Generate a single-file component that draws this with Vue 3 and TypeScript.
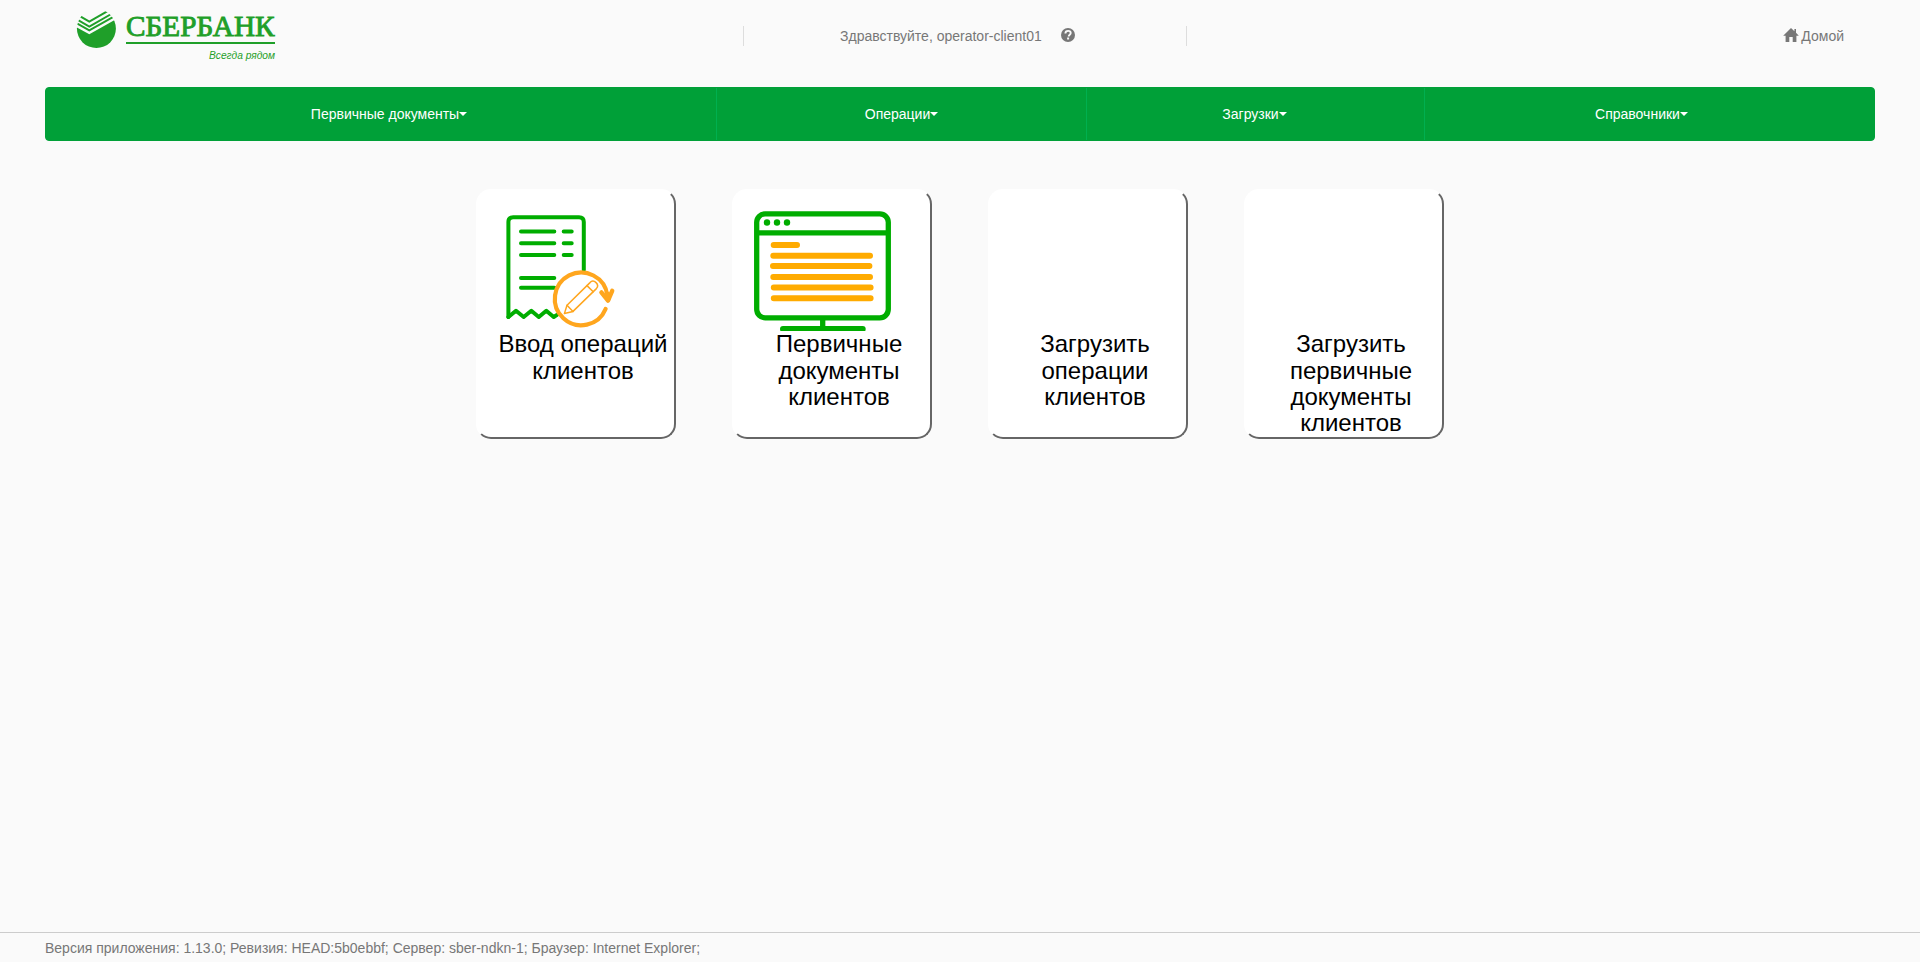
<script setup lang="ts">
interface MenuItem {
  title: string
  slot: string
}
interface Tile {
  title: string
  icon: 'receipt' | 'monitor' | null
}

const menu: MenuItem[] = [
  { title: 'Первичные документы', slot: 'documents' },
  { title: 'Операции', slot: 'operations' },
  { title: 'Загрузки', slot: 'uploads' },
  { title: 'Справочники', slot: 'catalogs' },
]

const tiles: Tile[] = [
  { title: 'Ввод операций клиентов', icon: 'receipt' },
  { title: 'Первичные документы клиентов', icon: 'monitor' },
  { title: 'Загрузить операции клиентов', icon: null },
  { title: 'Загрузить первичные документы клиентов', icon: null },
]
</script>

<template>
  <div class="page">
    <header class="header">
      <svg class="logo" width="260" height="80" viewBox="0 0 260 80">
        <defs>
          <clipPath id="disc"><circle cx="26.4" cy="28.6" r="19.5" /></clipPath>
        </defs>
        <g clip-path="url(#disc)">
          <path class="logo-fill" d="M5 26.4 L19.3 34.2 L48 18.2 V50 H5 Z" />
          <g class="logo-stripes">
            <path d="M5 22.4 L19.3 30.4 L47 14.9" />
            <path d="M5 18.4 L19.3 26.5 L43 13" />
            <path d="M9 15.6 L19.3 21.6 L38 10.8" />
          </g>
        </g>
        <text class="logo-name" x="56" y="35.5" textLength="148.5" lengthAdjust="spacingAndGlyphs">СБЕРБАНК</text>
        <rect class="logo-fill" x="56" y="42" width="149" height="2" />
        <text class="logo-motto" x="139" y="59" textLength="66" lengthAdjust="spacingAndGlyphs">Всегда рядом</text>
      </svg>
      <div class="greeting">
        <span>Здравствуйте, operator-client01</span>
        <svg class="help" width="14" height="14" viewBox="0 0 14 14">
          <circle cx="7" cy="7" r="7" fill="#777" />
          <path d="M4.4 5.4 C4.4 3.5 5.5 2.9 7.1 2.9 C8.8 2.9 9.7 3.8 9.7 5.1 C9.7 6.8 7.7 6.8 7.7 8.4" fill="none" stroke="#fafafa" stroke-width="1.9" />
          <rect x="6.1" y="9.5" width="2" height="2" fill="#fafafa" />
        </svg>
      </div>
      <a class="home">
        <svg width="16" height="14" viewBox="0 0 16 14">
          <path d="M8 0 L11.4 3.2 V1 H13 V4.7 L15.8 7.7 H13.4 V14 H9.7 V9 H6.3 V14 H2.6 V7.7 H0.2 Z" fill="#777" />
        </svg>
        <span>Домой</span>
      </a>
    </header>

    <nav class="menu">
      <a v-for="item in menu" :key="item.slot" class="menu-item" :class="item.slot">
        <span>{{ item.title }}</span><i class="caret"></i>
      </a>
    </nav>

    <main class="tiles">
      <a v-for="tile in tiles" :key="tile.title" class="tile">
        <div class="picture">
          <svg v-if="tile.icon === 'receipt'" width="196" height="140" viewBox="2 2 196 140">
            <g class="green thin">
              <path d="M32.4 128 V33 Q32.4 28.2 37.2 28.2 H103 Q107.8 28.2 107.8 33 V81" />
              <path d="M32.4 128 L40 121.8 L47.7 128 L55.3 121.8 L62.8 128 L70.3 121.8 L77.7 128 L81 125.8" />
              <path d="M45 42.4 H78.3 M45 54.2 H78.3 M45 66 H78.3 M45 89 H78.3 M45 98.7 H78.3" />
              <path d="M87.7 42.4 H95.7 M87.7 54.2 H95.7 M87.7 66 H95.7" />
            </g>
            <circle cx="105.2" cy="109.7" r="26.4" fill="#fff" />
            <g class="orange">
              <path d="M129.6 120 A26.4 26.4 0 1 1 131.4 106.5" stroke-width="4.2" />
              <path d="M125.4 103.4 L132 111.6 L136.2 101.8" stroke-width="4.4" />
              <path d="M131.2 105 L132 110" stroke-width="5" />
              <g stroke-width="1.5">
                <path d="M88.4 124.6 L91 116.2 L114 93.6 Q116.8 90.4 119.8 93.4 Q123.2 96.6 120.4 99.6 L97 122.4 Z" />
                <path d="M91 116.2 L97 122.4 M111 96.6 L117.2 102.7" />
              </g>
            </g>
          </svg>
          <svg v-else-if="tile.icon === 'monitor'" width="196" height="140" viewBox="2 2 196 140">
            <g class="green">
              <rect x="24.7" y="24.8" width="131.6" height="104" rx="8.5" />
              <path d="M24.7 43.8 H156.3 M90.7 129 V140" stroke-linecap="butt" />
              <path d="M51 140 H130.7" stroke-width="6" />
            </g>
            <g fill="#00ad00">
              <circle cx="35" cy="33.5" r="3.2" />
              <circle cx="45" cy="33.5" r="3.2" />
              <circle cx="55" cy="33.5" r="3.2" />
            </g>
            <path
              class="lines"
              d="M41.7 56.1 H65 M41.3 66.8 H138 M41 76.9 H137.4 M41.3 88.1 H138 M41.8 98.5 H138.6 M41.8 109.2 H138.6"
            />
          </svg>
        </div>
        <div class="tile-title">{{ tile.title }}</div>
      </a>
    </main>

    <footer class="footer">
      Версия приложения: 1.13.0; Ревизия: HEAD:5b0ebbf; Сервер: sber-ndkn-1; Браузер: Internet Explorer;
    </footer>
  </div>
</template>

<style>
body {
  margin: 0;
  background: #fafafa;
}
</style>

<style scoped>
.page {
  box-sizing: border-box;
  display: flex;
  flex-direction: column;
  height: 962px;
  font-family: 'Liberation Sans', Arial, sans-serif;
  font-size: 14px;
  line-height: 20px;
  color: #777;
  background: #fafafa;
}
.header {
  display: flex;
  height: 87px;
  padding: 0 76px 0 70px;
}
.logo {
  flex: none;
}
.logo-fill {
  fill: #1f9f29;
}
.logo-stripes path {
  fill: none;
  stroke: #1f9f29;
  stroke-width: 2;
}
.logo-name {
  font: 29px 'Liberation Serif', serif;
  fill: #1f9f29;
  stroke: #1f9f29;
  stroke-width: 0.9;
}
.logo-motto {
  font: italic 11.5px 'Liberation Sans', sans-serif;
  fill: #1f9f29;
}
.greeting {
  box-sizing: border-box;
  display: flex;
  gap: 19px;
  width: 444px;
  height: 20px;
  margin: 26px 0 0 413px;
  padding-left: 96px;
  border: solid #ddd;
  border-width: 0 1px;
}
.help {
  margin-top: 2px;
}
.home {
  display: flex;
  gap: 2px;
  height: 20px;
  margin: 26px 0 0 auto;
}
.home svg {
  margin-top: 2px;
}
.menu {
  box-sizing: border-box;
  display: grid;
  grid-template-columns: 670px 370px 338px 1fr;
  height: 54px;
  margin: 0 45px;
  border: 1px solid #00a038;
  border-radius: 4px;
  background: #00a038;
}
.menu-item {
  display: flex;
  align-items: center;
  justify-content: center;
  color: #fff;
}
.menu-item + .menu-item {
  border-left: 1px solid #00b050;
}
.documents {
  padding-left: 16px;
}
.uploads {
  padding-right: 2px;
}
.catalogs {
  padding-right: 16px;
}
.caret {
  border: solid transparent;
  border-width: 4px 4px 0;
  border-top-color: #fff;
}
.tiles {
  display: flex;
  justify-content: center;
  gap: 56px;
  margin-top: 48px;
}
.tile {
  box-sizing: border-box;
  width: 200px;
  height: 250px;
  border: 2px solid;
  border-color: #fff #666 #666 #fff;
  border-radius: 15px;
  background: #fff;
}
.picture {
  height: 140.2px;
}
.picture svg {
  display: block;
}
.green {
  fill: none;
  stroke: #00ad00;
  stroke-width: 5.3;
  stroke-linecap: round;
  stroke-linejoin: round;
}
.thin {
  stroke-width: 4;
}
.orange {
  fill: none;
  stroke: #ffa61e;
  stroke-linecap: round;
  stroke-linejoin: round;
}
.lines {
  fill: none;
  stroke: #ffab00;
  stroke-width: 6;
  stroke-linecap: round;
}
.tile-title {
  padding-left: 14px;
  font-size: 24px;
  line-height: 26.4px;
  text-align: center;
  color: #000;
}
.footer {
  height: 29px;
  margin-top: auto;
  padding: 0 45px;
  border-top: 1px solid #ccc;
  line-height: 31px;
}
</style>
